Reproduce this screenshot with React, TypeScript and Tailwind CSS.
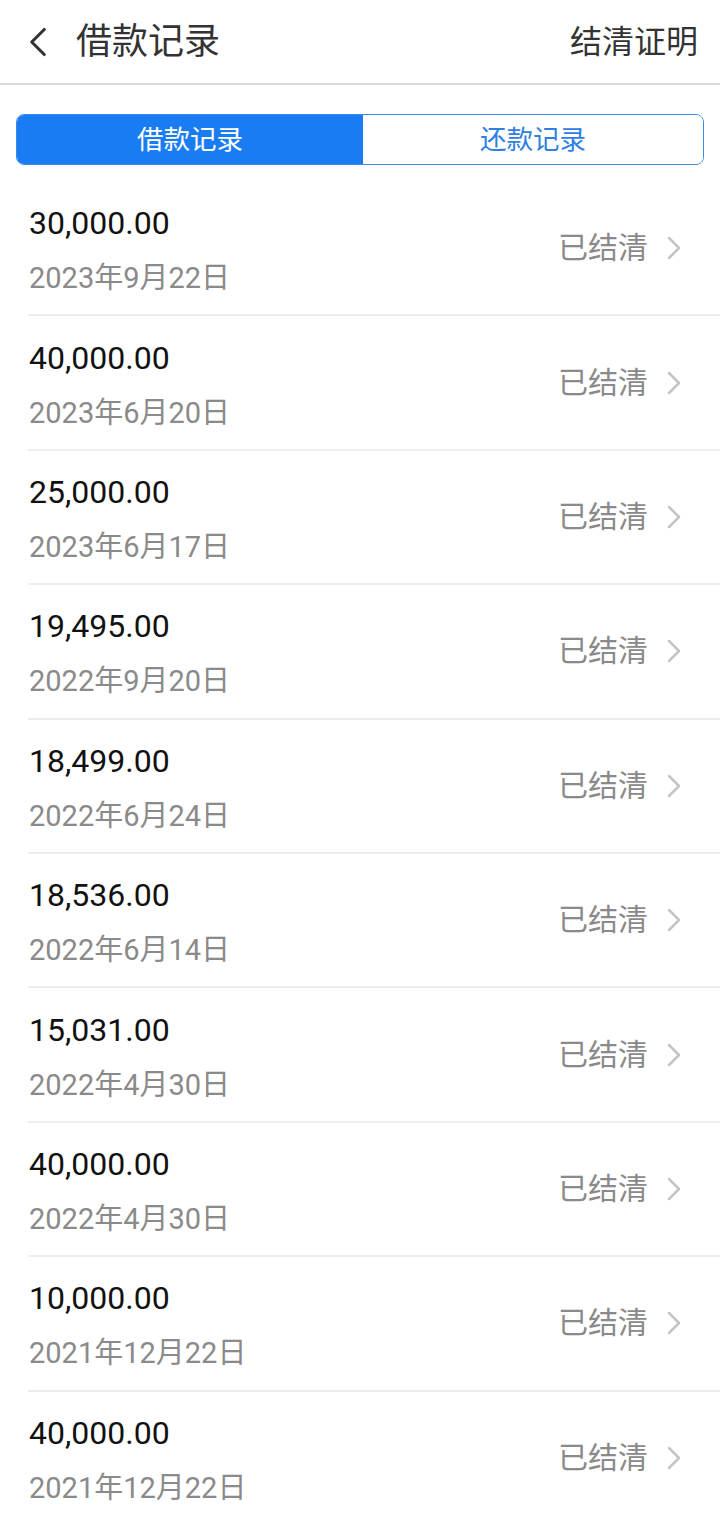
import { ChevronLeft, ChevronRight } from 'lucide-react';

const RECORDS = [
  { amount: '30,000.00', date: '2023年9月22日' },
  { amount: '40,000.00', date: '2023年6月20日' },
  { amount: '25,000.00', date: '2023年6月17日' },
  { amount: '19,495.00', date: '2022年9月20日' },
  { amount: '18,499.00', date: '2022年6月24日' },
  { amount: '18,536.00', date: '2022年6月14日' },
  { amount: '15,031.00', date: '2022年4月30日' },
  { amount: '40,000.00', date: '2022年4月30日' },
  { amount: '10,000.00', date: '2021年12月22日' },
  { amount: '40,000.00', date: '2021年12月22日' },
];

export default function App() {
  return (
    <div
      className="w-[720px] h-[1524px] bg-white overflow-hidden"
      style={{ fontFamily: 'Roboto, "Noto Sans CJK SC", sans-serif' }}
    >
      {/* header */}
      <div className="h-[85px] flex items-center justify-between border-b-2 border-[#d9d9d9]">
        <div className="flex items-center">
          <ChevronLeft className="w-[50px] h-[50px] ml-[13px] text-[#333]" strokeWidth={1.5} />
          <span className="ml-[13px] text-[36px] text-[#333] leading-none">借款记录</span>
        </div>
        <span className="mr-[22px] text-[32px] text-[#333] leading-none">结清证明</span>
      </div>

      {/* tabs */}
      <div className="px-[16px] pt-[29px] pb-[17px]">
        <div className="flex h-[51px] rounded-[8px] border border-[#3b8be6] overflow-hidden">
          <div className="w-[346px] bg-[#1a7cf3] flex items-center justify-center text-white text-[26.5px]">
            借款记录
          </div>
          <div className="flex-1 bg-white flex items-center justify-center text-[#2f80e0] text-[26.5px]">
            还款记录
          </div>
        </div>
      </div>

      {/* list */}
      <div>
        {RECORDS.map((r, i) => (
          <div
            key={i}
            className="ml-[28px] h-[134.4px] border-b-2 border-[#ededed] flex items-center justify-between"
          >
            <div className="pl-[1px] pt-[4px] flex flex-col">
              <span className="text-[32px] text-[#111] leading-none">{r.amount}</span>
              <span className="mt-[25px] text-[29px] text-[#8a8a8a] leading-none">{r.date}</span>
            </div>
            <div className="flex items-center mr-[26px]">
              <span className="text-[30px] text-[#8a8a8a] leading-none">已结清</span>
              <ChevronRight className="w-[40px] h-[40px] ml-[6px] text-[#c4c4c4]" strokeWidth={1.5} />
            </div>
          </div>
        ))}
      </div>
    </div>
  );
}
